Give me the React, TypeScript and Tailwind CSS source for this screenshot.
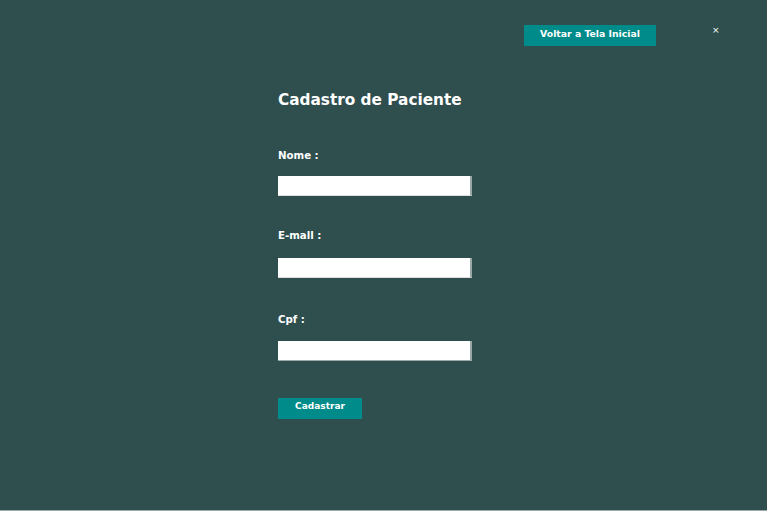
export default function App() {
  const font = { fontFamily: '"DejaVu Sans", sans-serif' };
  return (
    <div className="w-[767px] h-[511px] bg-[#2F4F4F] border-b border-[#9aa9a7] flex flex-col" style={font}>
      <div className="flex items-start pt-[25px]">
        <button className="ml-[524px] w-[132px] h-[21px] pb-[4px] bg-[#008B8B] text-white text-[9.3px] font-bold leading-none">
          Voltar a Tela Inicial
        </button>
        <span className="ml-[56px] mt-[1px] text-white text-[9px] leading-none">×</span>
      </div>
      <div className="pl-[278px] flex flex-col">
        <h1 className="mt-[44px] text-white text-[15.3px] font-bold leading-[20px]">Cadastro de Paciente</h1>
        <label className="mt-[39px] text-white text-[10.2px] font-bold leading-[14px]">Nome :</label>
        <input className="mt-[13px] w-[194px] h-[20px] bg-white border-r-2 border-b border-r-[#9aa9a7] border-b-[#dddddd] outline-none" />
        <label className="mt-[33px] text-white text-[10.2px] font-bold leading-[14px]">E-mall :</label>
        <input className="mt-[15px] w-[194px] h-[20px] bg-white border-r-2 border-b border-r-[#9aa9a7] border-b-[#dddddd] outline-none" />
        <label className="mt-[35px] text-white text-[10.2px] font-bold leading-[14px]">Cpf :</label>
        <input className="mt-[14px] w-[194px] h-[20px] bg-white border-r-2 border-b border-r-[#9aa9a7] border-b-[#9aa9a7] outline-none" />
        <button className="mt-[37px] w-[84px] h-[21px] pb-[4px] bg-[#008B8B] text-white text-[9px] font-bold leading-none">
          Cadastrar
        </button>
      </div>
    </div>
  );
}
